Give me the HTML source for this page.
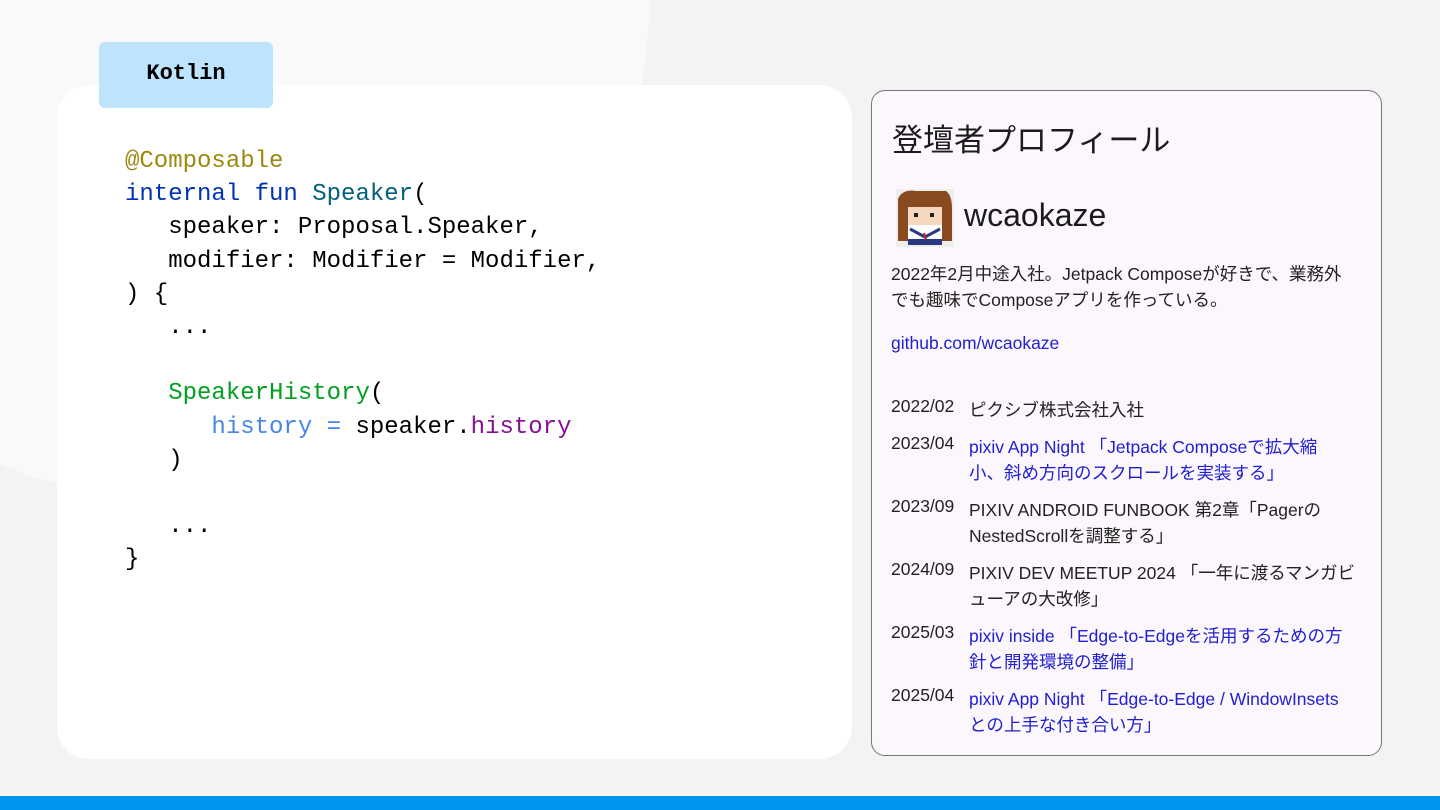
<!DOCTYPE html>
<html><head><meta charset="utf-8"><style>
*{margin:0;padding:0;box-sizing:border-box}
body{width:1440px;height:810px;background:#f3f3f3;position:relative;overflow:hidden;font-family:"Liberation Sans","Noto Sans CJK JP",sans-serif}
.circ{position:absolute;left:-300px;top:-520px;width:950px;height:1020px;border-radius:50%;background:#f9f9f9}
.code{position:absolute;left:57px;top:85px;width:795px;height:674px;background:#fff;border-radius:32px}
.tag{position:absolute;left:99px;top:42px;width:174px;height:66px;background:#bde3fd;border-radius:6px;font:bold 22px "Liberation Mono",monospace;text-align:center;line-height:64px;color:#000}
pre{position:absolute;left:125px;top:145px;font:24px/33.2px "Liberation Mono",monospace;color:#000}
.an{color:#9e880d}.kw{color:#0033b3}.fn{color:#00627a}.cf{color:#00a020}.pn{color:#4a86e8}.pr{color:#871094}
.card{position:absolute;left:871px;top:90px;width:511px;height:666px;background:#fcf7fd;border:1px solid #777;border-radius:14px}
.h{position:absolute;left:20px;top:24px;font-size:31px;color:#1b1b1b}
.av{position:absolute;left:24px;top:98px;width:58px;height:58px}
.nm{position:absolute;left:92px;top:106px;font-size:32px;color:#1b1b1b}
.bio{position:absolute;left:19px;top:170px;font-size:17.5px;line-height:26px;color:#222;white-space:nowrap}
.gh{position:absolute;left:19px;top:242px;font-size:17.5px;color:#2020d0}
.tl{position:absolute;left:19px;top:306px;font-size:17.5px;line-height:26px;color:#222}
.row{display:flex;margin-bottom:11px}
.d{width:78px;flex:none;margin-top:-4px}
.t{white-space:nowrap}
.l{color:#2020d0}
.bar{position:absolute;left:0;top:796px;width:1440px;height:14px;background:#0095ee}
</style></head><body>
<div class="circ"></div>
<div class="code"></div>
<div class="tag">Kotlin</div>
<pre><span class="an">@Composable</span>
<span class="kw">internal fun</span> <span class="fn">Speaker</span>(
   speaker: Proposal.Speaker,
   modifier: Modifier = Modifier,
) {
   ...

   <span class="cf">SpeakerHistory</span>(
      <span class="pn">history =</span> speaker.<span class="pr">history</span>
   )

   ...
}</pre>
<div class="card">
<div class="h">登壇者プロフィール</div>
<svg class="av" viewBox="0 0 58 58"><rect width="58" height="58" fill="#eee"/><path d="M2 10 Q6 0 20 2 L50 2 Q56 6 56 20 L56 52 L46 52 L46 18 L12 18 L12 52 L2 52Z" fill="#8a4a20"/><rect x="12" y="18" width="34" height="18" fill="#f6d8c0"/><rect x="18" y="24" width="4" height="4" fill="#222"/><rect x="34" y="24" width="4" height="4" fill="#222"/><rect x="12" y="36" width="34" height="20" fill="#fff"/><path d="M14 40 L29 48 L44 40" stroke="#2a3a80" stroke-width="3" fill="none"/><path d="M28 44 L30 50" stroke="#d02020" stroke-width="2"/><rect x="12" y="50" width="34" height="6" fill="#2a3a80"/></svg>
<div class="nm">wcaokaze</div>
<div class="bio">2022年2月中途入社。Jetpack Composeが好きで、業務外<br>でも趣味でComposeアプリを作っている。</div>
<div class="gh">github.com/wcaokaze</div>
<div class="tl">
<div class="row"><div class="d">2022/02</div><div class="t">ピクシブ株式会社入社</div></div>
<div class="row"><div class="d">2023/04</div><div class="t l">pixiv App Night 「Jetpack Composeで拡大縮<br>小、斜め方向のスクロールを実装する」</div></div>
<div class="row"><div class="d">2023/09</div><div class="t">PIXIV ANDROID FUNBOOK 第2章「Pagerの<br>NestedScrollを調整する」</div></div>
<div class="row"><div class="d">2024/09</div><div class="t">PIXIV DEV MEETUP 2024 「一年に渡るマンガビ<br>ューアの大改修」</div></div>
<div class="row"><div class="d">2025/03</div><div class="t l">pixiv inside 「Edge-to-Edgeを活用するための方<br>針と開発環境の整備」</div></div>
<div class="row"><div class="d">2025/04</div><div class="t l">pixiv App Night 「Edge-to-Edge / WindowInsets<br>との上手な付き合い方」</div></div>
</div>
</div>
<div class="bar"></div>
</body></html>
